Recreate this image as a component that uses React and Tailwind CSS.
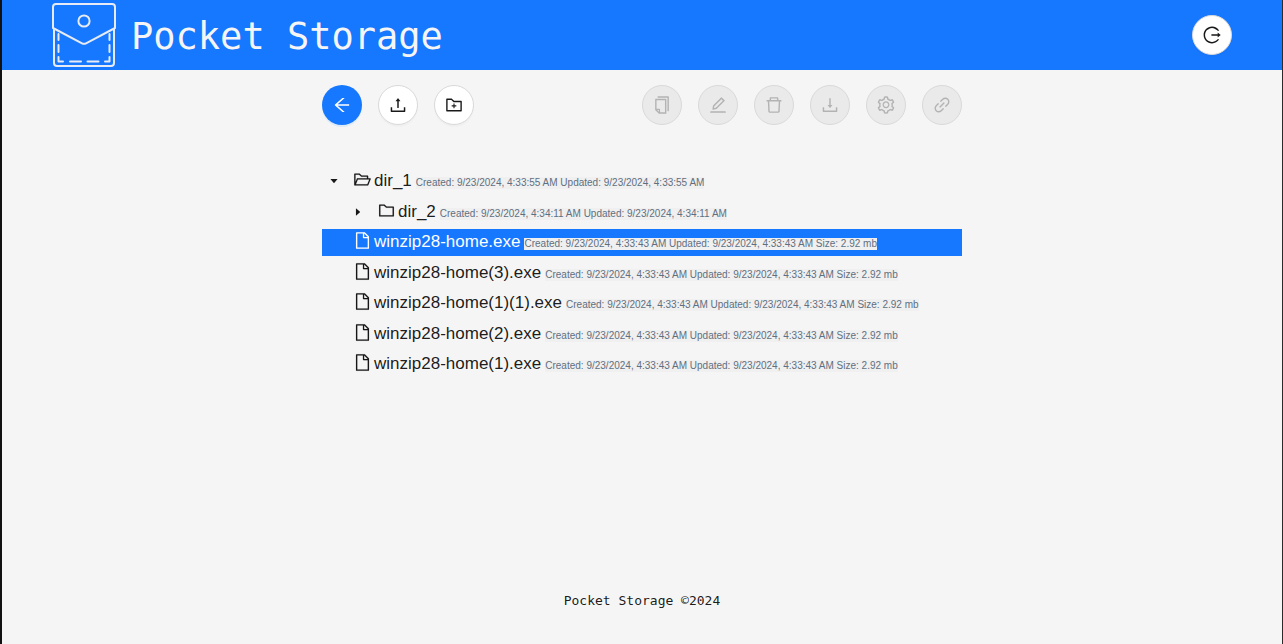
import {
  AiOutlineArrowLeft,
  AiOutlineUpload,
  AiOutlineFolderAdd,
  AiOutlineCopy,
  AiOutlineEdit,
  AiOutlineDelete,
  AiOutlineDownload,
  AiOutlineSetting,
  AiOutlineLink,
  AiOutlineLogout,
  AiOutlineFolderOpen,
  AiOutlineFolder,
  AiOutlineFile,
  AiFillCaretDown,
  AiFillCaretRight,
} from "react-icons/ai";

const variants = {
  primary: "bg-[#1677ff] text-white shadow-[0_2px_0_rgba(5,145,255,0.1)]",
  plain: "border border-[#d9d9d9] bg-white text-black/90 shadow-[0_2px_0_rgba(0,0,0,0.02)]",
  disabled: "border border-[#d9d9d9] bg-[#eaeaea] text-[#b3b3b3]",
};

function RoundButton({ icon: Icon, label, variant = "plain" }) {
  return (
    <button
      type="button"
      aria-label={label}
      disabled={variant === "disabled"}
      className={`flex size-10 shrink-0 items-center justify-center rounded-full ${variants[variant]}`}
    >
      <Icon size={20} />
    </button>
  );
}

function Logo() {
  return (
    <svg
      viewBox="0 0 64 64"
      className="size-16 shrink-0"
      fill="none"
      stroke="#e6ebf5"
      strokeWidth="2"
      strokeLinecap="round"
      strokeLinejoin="round"
      aria-hidden="true"
    >
      <path d="M1 25V4a3 3 0 0 1 3-3H60a3 3 0 0 1 3 3V25L34 40.300Q32 41.400 30 40.300Z" />
      <path d="M2 26V60a3 3 0 0 0 3 3H59a3 3 0 0 0 3-3V26" />
      <circle cx="32" cy="18" r="5.600" />
      <path d="M6.500 31v6M6.500 42v7M6.500 54v4.500H11M18 58.500H29M35.500 58.500H46.500M53 58.500H57.500V54M57.500 49V42M57.500 37V31" />
    </svg>
  );
}

const stamp = "9/23/2024, 4:33:43 AM";

const entries = [
  { name: "dir_1", kind: "open", created: "9/23/2024, 4:33:55 AM" },
  { name: "dir_2", kind: "closed", created: "9/23/2024, 4:34:11 AM", nested: true },
  { name: "winzip28-home.exe", kind: "file", created: stamp, size: "2.92 mb", selected: true },
  { name: "winzip28-home(3).exe", kind: "file", created: stamp, size: "2.92 mb" },
  { name: "winzip28-home(1)(1).exe", kind: "file", created: stamp, size: "2.92 mb" },
  { name: "winzip28-home(2).exe", kind: "file", created: stamp, size: "2.92 mb" },
  { name: "winzip28-home(1).exe", kind: "file", created: stamp, size: "2.92 mb" },
];

const icons = { open: AiOutlineFolderOpen, closed: AiOutlineFolder, file: AiOutlineFile };
const carets = { open: AiFillCaretDown, closed: AiFillCaretRight };

function Entry({ entry }) {
  const Icon = icons[entry.kind];
  const Caret = carets[entry.kind];
  return (
    <li
      role="treeitem"
      aria-selected={Boolean(entry.selected)}
      aria-level={entry.nested ? 2 : 1}
      className={`flex h-[27px] items-start pt-px ${entry.nested ? "pl-6" : ""} ${
        entry.selected ? "bg-[#1677ff] text-white" : "text-black/90"
      }`}
    >
      <span className="flex h-6 w-6 shrink-0 items-center justify-center">
        {Caret && <Caret size={10} />}
      </span>
      <span className="flex h-[21px] w-8 shrink-0 items-center justify-center">
        <Icon size={19} strokeWidth={4} className="shrink-0" />
      </span>
      <span className="-ml-1 flex items-baseline gap-1 whitespace-nowrap">
        <span className="text-[17px] leading-6">{entry.name}</span>
        <span className="bg-[#f0f0f0] text-[10px] leading-3 text-[#5f6f7f]">
          Created: {entry.created} Updated: {entry.created}
          {entry.size && ` Size: ${entry.size}`}
        </span>
      </span>
    </li>
  );
}

export default function App() {
  return (
    <div className="flex min-h-screen flex-col border-r border-l-2 border-r-[#2b2b2b] border-l-[#111111] bg-[#f5f5f5] font-['Liberation_Sans',sans-serif]">
      <header className="flex h-[70px] items-center justify-between bg-[#1677ff] px-[50px]">
        <div className="flex items-center gap-[15px]">
          <Logo />
          <h1 className="pt-1 font-['DejaVu_Sans_Mono',monospace] text-[37px] leading-10 text-[#f5f5f5]">
            Pocket Storage
          </h1>
        </div>
        <RoundButton icon={AiOutlineLogout} label="Log out" />
      </header>

      <main className="mx-auto w-1/2 grow pt-[15px]">
        <div className="flex justify-between">
          <div className="flex gap-4">
            <RoundButton icon={AiOutlineArrowLeft} label="Back" variant="primary" />
            <RoundButton icon={AiOutlineUpload} label="Upload" />
            <RoundButton icon={AiOutlineFolderAdd} label="New folder" />
          </div>
          <div className="flex gap-4">
            <RoundButton icon={AiOutlineCopy} label="Copy" variant="disabled" />
            <RoundButton icon={AiOutlineEdit} label="Rename" variant="disabled" />
            <RoundButton icon={AiOutlineDelete} label="Delete" variant="disabled" />
            <RoundButton icon={AiOutlineDownload} label="Download" variant="disabled" />
            <RoundButton icon={AiOutlineSetting} label="Settings" variant="disabled" />
            <RoundButton icon={AiOutlineLink} label="Share link" variant="disabled" />
          </div>
        </div>

        <ul role="tree" className="mt-[43px] flex min-h-[210px] flex-col justify-between">
          {entries.map((entry) => (
            <Entry key={entry.name} entry={entry} />
          ))}
        </ul>
      </main>

      <footer className="pb-[31px] text-center font-['DejaVu_Sans_Mono',monospace] text-[13px] leading-6 text-black/90">
        Pocket Storage ©2024
      </footer>
    </div>
  );
}
